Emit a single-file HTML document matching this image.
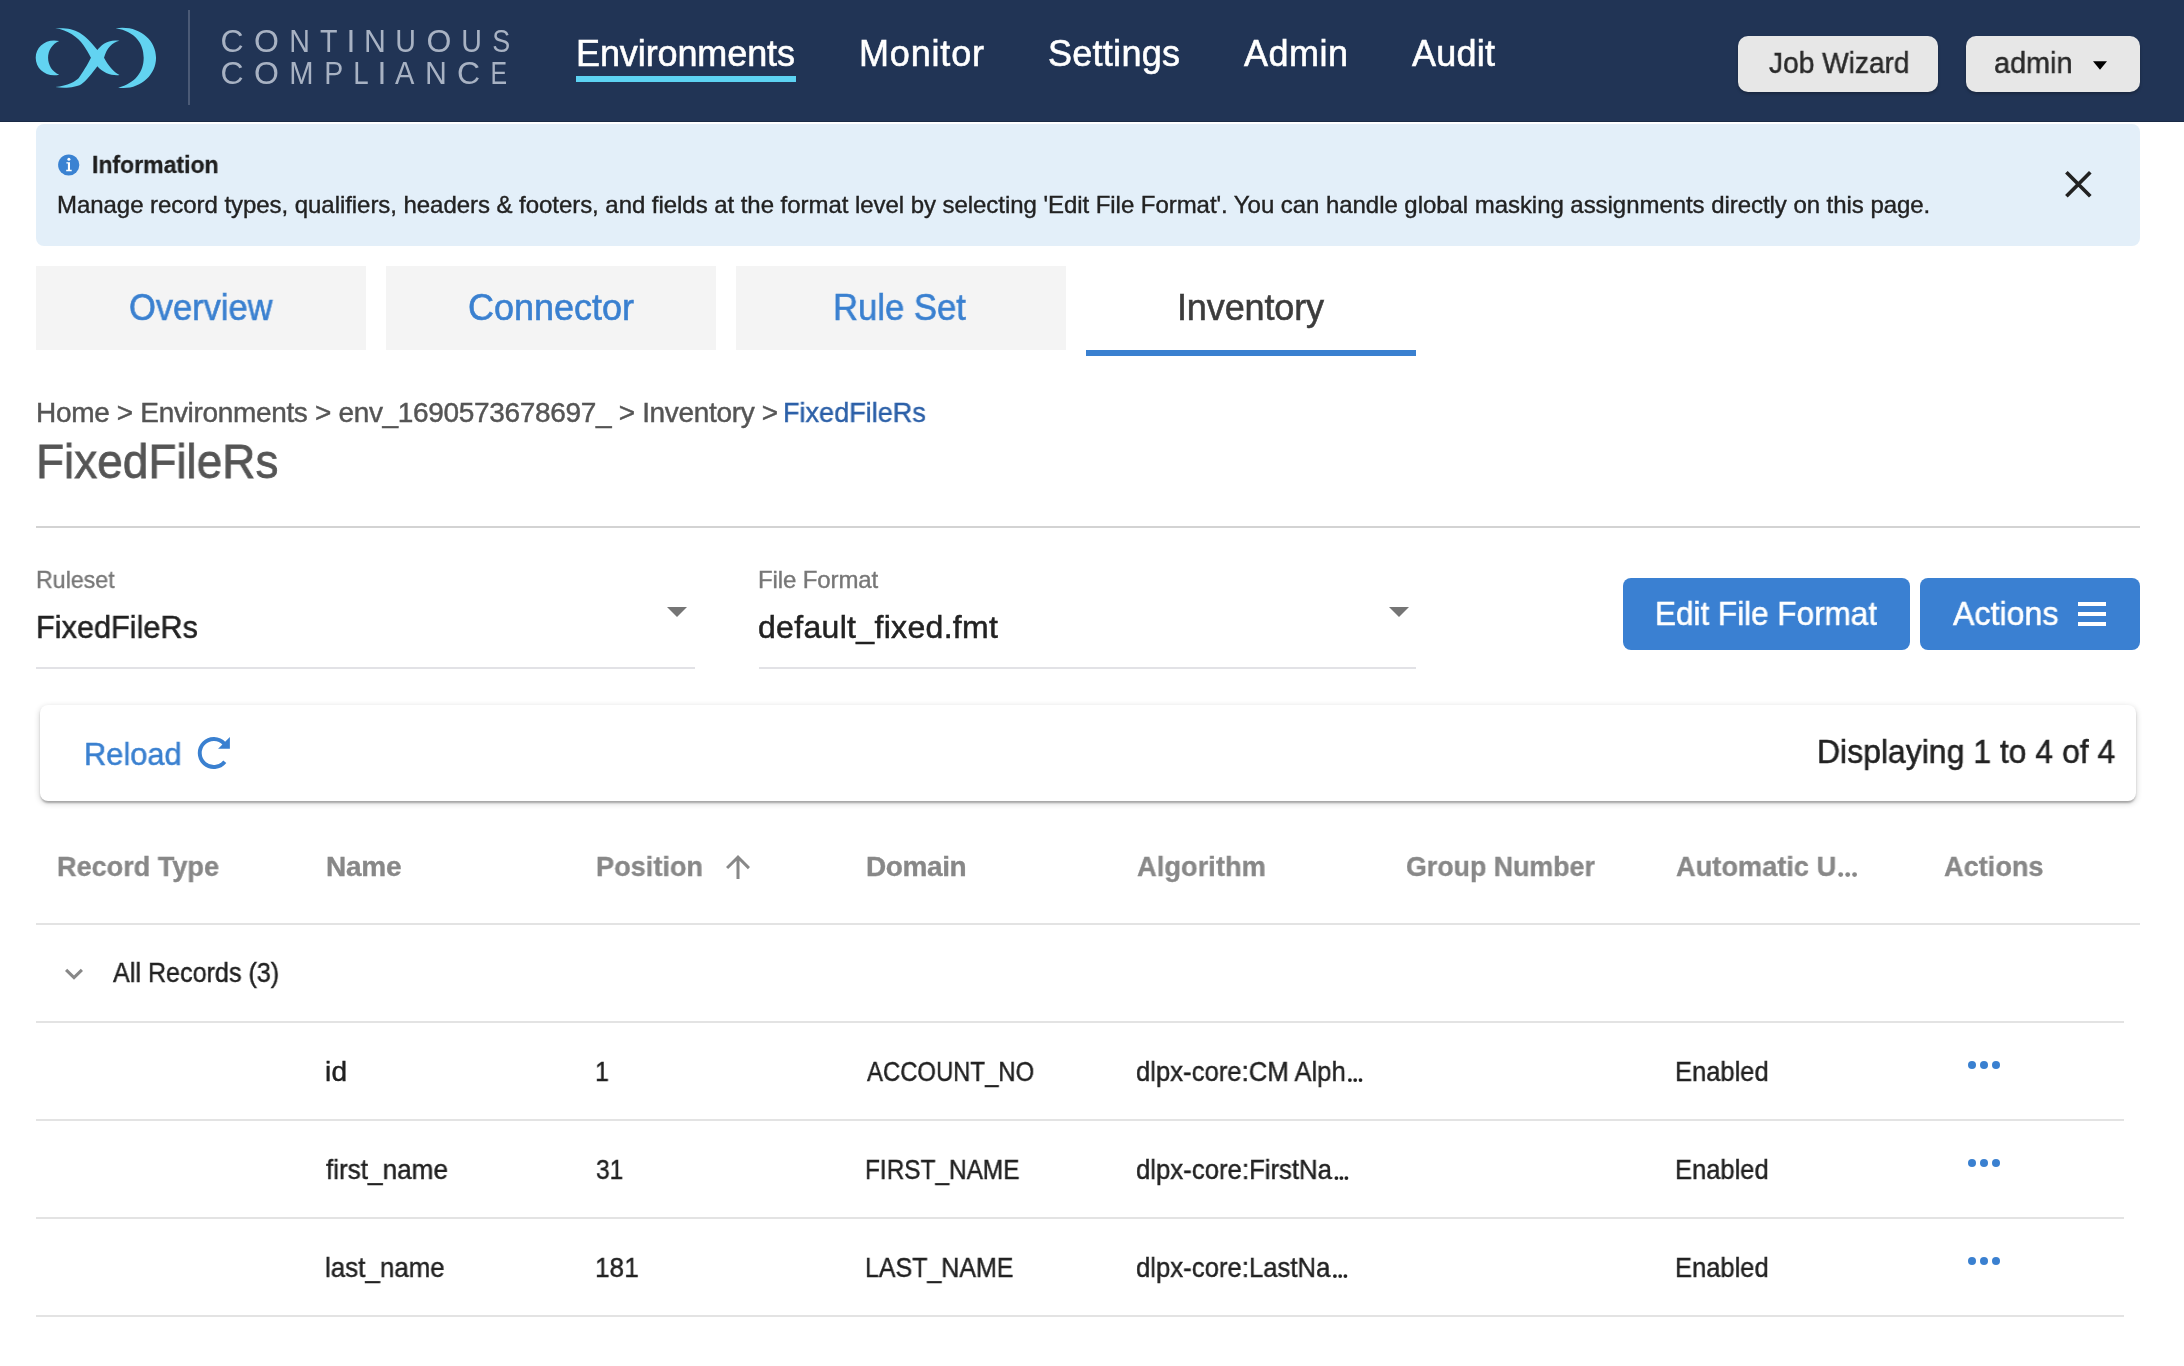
<!DOCTYPE html>
<html><head><meta charset="utf-8">
<style>
html,body{margin:0;padding:0;background:#fff;width:2184px;height:1366px;overflow:hidden;}
body{position:relative;font-family:"Liberation Sans",sans-serif;}
.t{position:absolute;white-space:pre;will-change:transform;}
.a{position:absolute;}
</style></head><body>
<div class="a" style="left:0;top:0;width:2184px;height:122px;background:#213455;"></div>
<div class="a" style="left:0;top:121px;width:2184px;height:1px;background:#1a2a45;"></div>
<svg class="a" style="left:25px;top:15px" width="180" height="90" viewBox="0 0 2184 1092"><g fill="#62d3f1">
<path d="M415,315 C260,280 130,380 130,520 C130,660 260,760 415,725 C330,690 280,610 280,520 C280,430 330,350 415,315 Z"/>
<path d="M366.8,161.7 C600,150 700,200 877.9,424.5 C920,370 1000,290 1146.4,311.9 C1060,330 990,400 958.8,519.8 C1000,600 1080,700 1146.4,727.7 C1060,740 940,700 877.9,620.8 C820,700 740,800 678.7,843.2 C620,875 500,895 366.8,874.9 C520,860 620,800 649.8,768 C700,700 760,600 799.9,519.8 C770,460 740,410 707.6,363.8 C640,270 520,180 366.8,161.7 Z"/>
<path d="M1100,162 C1380,120 1590,300 1590,520 C1590,740 1380,920 1130,882 C1340,830 1440,690 1440,520 C1440,350 1340,200 1100,162 Z"/>
</g></svg>
<svg class="a" style="left:0;top:0;will-change:transform" width="540" height="110"><g fill="#a8b2c3" font-family="Liberation Sans" font-size="32">
<text transform="translate(220.50 52.4) scale(1.000 1)">C</text><text transform="translate(254.00 52.4) scale(1.000 1)">O</text><text transform="translate(289.21 52.4) scale(0.895 1)">N</text><text transform="translate(320.00 52.4) scale(0.895 1)">T</text><text transform="translate(346.50 52.4) scale(1.000 1)">I</text><text transform="translate(364.11 52.4) scale(0.947 1)">N</text><text transform="translate(395.21 52.4) scale(0.895 1)">U</text><text transform="translate(426.50 52.4) scale(1.000 1)">O</text><text transform="translate(461.21 52.4) scale(0.895 1)">U</text><text transform="translate(492.16 52.4) scale(0.842 1)">S</text><text transform="translate(220.50 84.2) scale(1.000 1)">C</text><text transform="translate(254.00 84.2) scale(1.000 1)">O</text><text transform="translate(289.17 84.2) scale(0.913 1)">M</text><text transform="translate(324.22 84.2) scale(0.889 1)">P</text><text transform="translate(353.27 84.2) scale(0.867 1)">L</text><text transform="translate(377.50 84.2) scale(1.000 1)">I</text><text transform="translate(395.00 84.2) scale(0.909 1)">A</text><text transform="translate(425.11 84.2) scale(0.947 1)">N</text><text transform="translate(457.00 84.2) scale(1.000 1)">C</text><text transform="translate(490.44 84.2) scale(0.778 1)">E</text>
</g></svg>

<div class="a" style="left:188px;top:10px;width:2px;height:95px;background:#4b5a76;"></div>
<div class="a" style="left:576px;top:76px;width:220px;height:6px;background:#5dd3f3;"></div>
<div class="a" style="left:1738px;top:36px;width:200px;height:56px;border-radius:10px;background:#e7e7e7;box-shadow:0 2px 3px rgba(0,0,0,.25);"></div>
<div class="a" style="left:1966px;top:36px;width:174px;height:56px;border-radius:10px;background:#e7e7e7;box-shadow:0 2px 3px rgba(0,0,0,.25);"></div>
<svg class="a" style="left:2090px;top:58px" width="20" height="14"><path d="M3 3.3 L17 3.3 L10 11.7 Z" fill="#000"/></svg>
<div class="a" style="left:36px;top:124px;width:2104px;height:122px;border-radius:8px;background:#e3eff9;"></div>
<svg class="a" style="left:56px;top:152px" width="26" height="26" viewBox="0 0 26 26"><circle cx="12.7" cy="13" r="10.6" fill="#3a82d2"/><circle cx="12.9" cy="7.3" r="1.5" fill="#fff"/><path d="M10.4 10.2 H14 V17.8 H15.7 V19.2 H10.2 V17.8 H11.9 V11.6 H10.4 Z" fill="#fff"/></svg>
<svg class="a" style="left:2060px;top:166px" width="36" height="36"><path d="M6.4 6.3 L30.3 30.2 M30.3 6.3 L6.4 30.2" stroke="#222" stroke-width="3.7"/></svg>
<div class="a" style="left:36px;top:266px;width:330px;height:84px;background:#f4f4f4;"></div>
<div class="a" style="left:386px;top:266px;width:330px;height:84px;background:#f4f4f4;"></div>
<div class="a" style="left:736px;top:266px;width:330px;height:84px;background:#f4f4f4;"></div>
<div class="a" style="left:1086px;top:350px;width:330px;height:6px;background:#3a80d0;"></div>
<div class="a" style="left:36px;top:526px;width:2104px;height:2px;background:#d3d3d3;"></div>
<div class="a" style="left:36px;top:667px;width:659px;height:2px;background:#e2e2e6;"></div>
<div class="a" style="left:759px;top:667px;width:657px;height:2px;background:#e2e2e6;"></div>
<svg class="a" style="left:660px;top:600px" width="34" height="24"><path d="M7 7.1 L27 7.1 L17 17 Z" fill="#757575"/></svg>
<svg class="a" style="left:1382px;top:600px" width="34" height="24"><path d="M7 7.1 L27 7.1 L17 17 Z" fill="#757575"/></svg>
<div class="a" style="left:1623px;top:578px;width:287px;height:72px;border-radius:8px;background:#3a80d2;"></div>
<div class="a" style="left:1920px;top:578px;width:220px;height:72px;border-radius:8px;background:#3a80d2;"></div>
<div class="a" style="left:2078px;top:602px;width:28px;height:4px;background:#fff;"></div>
<div class="a" style="left:2078px;top:612px;width:28px;height:4px;background:#fff;"></div>
<div class="a" style="left:2078px;top:622px;width:28px;height:4px;background:#fff;"></div>
<div class="a" style="left:40px;top:705px;width:2096px;height:96px;border-radius:8px;background:#fff;box-shadow:0 2px 2px rgba(0,0,0,.14),0 4px 2px -2px rgba(0,0,0,.12),0 2px 6px rgba(0,0,0,.2);"></div>
<svg class="a" style="left:190px;top:728px" width="48" height="48"><g transform="translate(-190 -728)"><path d="M224.78 761.76 A14.05 14.05 0 1 1 224.24 743.6" stroke="#3a80d0" stroke-width="3.9" fill="none"/><path d="M229.9 737 L229.9 748.7 L218.1 748.7 Z" fill="#3a80d0"/></g></svg>
<div class="a" style="left:36px;top:923px;width:2104px;height:2px;background:#e3e3e3;"></div>
<div class="a" style="left:36px;top:1021px;width:2088px;height:2px;background:#e3e3e3;"></div>
<div class="a" style="left:36px;top:1119px;width:2088px;height:2px;background:#e3e3e3;"></div>
<div class="a" style="left:36px;top:1217px;width:2088px;height:2px;background:#e3e3e3;"></div>
<div class="a" style="left:36px;top:1315px;width:2088px;height:2px;background:#e3e3e3;"></div>
<svg class="a" style="left:720px;top:849px" width="36" height="36" viewBox="0 0 24 24"><path fill="#888" d="M4 12l1.41 1.41L11 7.83V20h2V7.83l5.58 5.59L20 12l-8-8-8 8z"/></svg>
<svg class="a" style="left:60px;top:960px" width="28" height="28"><path d="M6.1 9.9 L14 17.6 L21.9 9.9" stroke="#888" stroke-width="3.1" fill="none"/></svg>
<svg class="a" style="left:1960px;top:1050px" width="48" height="230"><g fill="#3a80d0"><circle cx="12" cy="15" r="4"/><circle cx="24" cy="15" r="4"/><circle cx="36" cy="15" r="4"/><circle cx="12" cy="113" r="4"/><circle cx="24" cy="113" r="4"/><circle cx="36" cy="113" r="4"/><circle cx="12" cy="211" r="4"/><circle cx="24" cy="211" r="4"/><circle cx="36" cy="211" r="4"/></g></svg>
<svg class="a" style="left:0;top:0" width="2184" height="1366"><circle cx="1349.9" cy="1080.1" r="1.90" fill="#222222"/><circle cx="1355.2" cy="1080.1" r="1.90" fill="#222222"/><circle cx="1360.5" cy="1080.1" r="1.90" fill="#222222"/><circle cx="1336.4" cy="1178.1" r="1.90" fill="#222222"/><circle cx="1341.4" cy="1178.1" r="1.90" fill="#222222"/><circle cx="1346.4" cy="1178.1" r="1.90" fill="#222222"/><circle cx="1334.9" cy="1276.1" r="1.90" fill="#222222"/><circle cx="1340.2" cy="1276.1" r="1.90" fill="#222222"/><circle cx="1345.4" cy="1276.1" r="1.90" fill="#222222"/><circle cx="1840.7" cy="874.6" r="2.40" fill="#888888"/><circle cx="1847.7" cy="874.6" r="2.40" fill="#888888"/><circle cx="1854.6" cy="874.6" r="2.40" fill="#888888"/></svg>
<div class="t" style="left:576.0px;top:35.5px;font-size:36px;line-height:36px;font-weight:400;color:#ffffff;letter-spacing:-0.10px;-webkit-text-stroke:0.58px #ffffff">Environments</div>
<div class="t" style="left:859.0px;top:35.5px;font-size:36px;line-height:36px;font-weight:400;color:#ffffff;letter-spacing:0.82px;-webkit-text-stroke:0.58px #ffffff">Monitor</div>
<div class="t" style="left:1048.0px;top:35.5px;font-size:36px;line-height:36px;font-weight:400;color:#ffffff;letter-spacing:0.27px;-webkit-text-stroke:0.58px #ffffff">Settings</div>
<div class="t" style="left:1244.0px;top:35.5px;font-size:36px;line-height:36px;font-weight:400;color:#ffffff;letter-spacing:0.50px;-webkit-text-stroke:0.58px #ffffff">Admin</div>
<div class="t" style="left:1412.0px;top:35.5px;font-size:36px;line-height:36px;font-weight:400;color:#ffffff;letter-spacing:0.24px;-webkit-text-stroke:0.58px #ffffff">Audit</div>
<div class="t" style="left:1769.0px;top:48.1px;font-size:30px;line-height:30px;font-weight:400;color:#2a2a2a;letter-spacing:0.00px;-webkit-text-stroke:0.48px #2a2a2a;transform:scaleX(0.9369);transform-origin:0 0">Job Wizard</div>
<div class="t" style="left:1994.0px;top:48.1px;font-size:30px;line-height:30px;font-weight:400;color:#2a2a2a;letter-spacing:0.00px;-webkit-text-stroke:0.48px #2a2a2a;transform:scaleX(0.9617);transform-origin:0 0">admin</div>
<div class="t" style="left:92.0px;top:152.7px;font-size:24px;line-height:24px;font-weight:700;color:#1f1f1f;letter-spacing:0.00px;-webkit-text-stroke:0.29px #1f1f1f;transform:scaleX(0.9591);transform-origin:0 0">Information</div>
<div class="t" style="left:57.0px;top:192.7px;font-size:24px;line-height:24px;font-weight:400;color:#222222;letter-spacing:-0.05px;-webkit-text-stroke:0.38px #222222">Manage record types, qualifiers, headers &amp; footers, and fields at the format level by selecting 'Edit File Format'. You can handle global masking assignments directly on this page.</div>
<div class="t" style="left:128.5px;top:289.5px;font-size:36px;line-height:36px;font-weight:400;color:#3a80d0;letter-spacing:0.00px;-webkit-text-stroke:0.58px #3a80d0;transform:scaleX(0.9565);transform-origin:0 0">Overview</div>
<div class="t" style="left:468.0px;top:289.5px;font-size:36px;line-height:36px;font-weight:400;color:#3a80d0;letter-spacing:-0.01px;-webkit-text-stroke:0.58px #3a80d0">Connector</div>
<div class="t" style="left:833.1px;top:289.5px;font-size:36px;line-height:36px;font-weight:400;color:#3a80d0;letter-spacing:0.00px;-webkit-text-stroke:0.58px #3a80d0;transform:scaleX(0.9627);transform-origin:0 0">Rule Set</div>
<div class="t" style="left:1177.0px;top:289.5px;font-size:36px;line-height:36px;font-weight:400;color:#3c3c3c;letter-spacing:-0.13px;-webkit-text-stroke:0.58px #3c3c3c">Inventory</div>
<div class="t" style="left:36.0px;top:399.3px;font-size:28px;line-height:28px;font-weight:400;color:#555555;letter-spacing:-0.33px;-webkit-text-stroke:0.45px #555555">Home &gt; Environments &gt; env_1690573678697_ &gt; Inventory &gt;</div>
<div class="t" style="left:783.1px;top:399.3px;font-size:28px;line-height:28px;font-weight:400;color:#2c60a8;letter-spacing:0.00px;-webkit-text-stroke:0.45px #2c60a8;transform:scaleX(0.9668);transform-origin:0 0">FixedFileRs</div>
<div class="t" style="left:36.1px;top:438.4px;font-size:48px;line-height:48px;font-weight:400;color:#555555;letter-spacing:0.00px;-webkit-text-stroke:0.77px #555555;transform:scaleX(0.9564);transform-origin:0 0">FixedFileRs</div>
<div class="t" style="left:36.0px;top:567.7px;font-size:24px;line-height:24px;font-weight:400;color:#777777;letter-spacing:0.00px;-webkit-text-stroke:0.38px #777777;transform:scaleX(0.9665);transform-origin:0 0">Ruleset</div>
<div class="t" style="left:36.1px;top:610.9px;font-size:32px;line-height:32px;font-weight:400;color:#222222;letter-spacing:0.00px;-webkit-text-stroke:0.51px #222222;transform:scaleX(0.9583);transform-origin:0 0">FixedFileRs</div>
<div class="t" style="left:758.0px;top:567.7px;font-size:24px;line-height:24px;font-weight:400;color:#777777;letter-spacing:-0.12px;-webkit-text-stroke:0.38px #777777">File Format</div>
<div class="t" style="left:758.0px;top:610.9px;font-size:32px;line-height:32px;font-weight:400;color:#222222;letter-spacing:0.32px;-webkit-text-stroke:0.51px #222222">default_fixed.fmt</div>
<div class="t" style="left:1655.1px;top:597.1px;font-size:33px;line-height:33px;font-weight:400;color:#ffffff;letter-spacing:0.00px;-webkit-text-stroke:0.53px #ffffff;transform:scaleX(0.9535);transform-origin:0 0">Edit File Format</div>
<div class="t" style="left:1953.0px;top:597.1px;font-size:33px;line-height:33px;font-weight:400;color:#ffffff;letter-spacing:0.00px;-webkit-text-stroke:0.53px #ffffff;transform:scaleX(0.9748);transform-origin:0 0">Actions</div>
<div class="t" style="left:84.1px;top:737.9px;font-size:32px;line-height:32px;font-weight:400;color:#3a80d0;letter-spacing:0.00px;-webkit-text-stroke:0.51px #3a80d0;transform:scaleX(0.9630);transform-origin:0 0">Reload</div>
<div class="t" style="left:1817.1px;top:735.1px;font-size:33px;line-height:33px;font-weight:400;color:#222222;letter-spacing:0.00px;-webkit-text-stroke:0.53px #222222;transform:scaleX(0.9679);transform-origin:0 0">Displaying 1 to 4 of 4</div>
<div class="t" style="left:56.5px;top:853.3px;font-size:28px;line-height:28px;font-weight:700;color:#888888;letter-spacing:0.00px;-webkit-text-stroke:0.34px #888888;transform:scaleX(0.9672);transform-origin:0 0">Record Type</div>
<div class="t" style="left:326.0px;top:853.3px;font-size:28px;line-height:28px;font-weight:700;color:#888888;letter-spacing:-0.23px;-webkit-text-stroke:0.34px #888888">Name</div>
<div class="t" style="left:596.0px;top:853.3px;font-size:28px;line-height:28px;font-weight:700;color:#888888;letter-spacing:0.00px;-webkit-text-stroke:0.34px #888888;transform:scaleX(0.9692);transform-origin:0 0">Position</div>
<div class="t" style="left:865.5px;top:853.3px;font-size:28px;line-height:28px;font-weight:700;color:#888888;letter-spacing:-0.41px;-webkit-text-stroke:0.34px #888888">Domain</div>
<div class="t" style="left:1137.0px;top:853.3px;font-size:28px;line-height:28px;font-weight:700;color:#888888;letter-spacing:0.00px;-webkit-text-stroke:0.34px #888888;transform:scaleX(0.9748);transform-origin:0 0">Algorithm</div>
<div class="t" style="left:1406.0px;top:853.3px;font-size:28px;line-height:28px;font-weight:700;color:#888888;letter-spacing:0.00px;-webkit-text-stroke:0.34px #888888;transform:scaleX(0.9560);transform-origin:0 0">Group Number</div>
<div class="t" style="left:1676.0px;top:853.3px;font-size:28px;line-height:28px;font-weight:700;color:#888888;letter-spacing:0.00px;-webkit-text-stroke:0.34px #888888;transform:scaleX(0.9714);transform-origin:0 0">Automatic U</div>
<div class="t" style="left:1944.0px;top:853.3px;font-size:28px;line-height:28px;font-weight:700;color:#888888;letter-spacing:0.00px;-webkit-text-stroke:0.34px #888888;transform:scaleX(0.9696);transform-origin:0 0">Actions</div>
<div class="t" style="left:113.0px;top:959.3px;font-size:28px;line-height:28px;font-weight:400;color:#222222;letter-spacing:0.00px;-webkit-text-stroke:0.45px #222222;transform:scaleX(0.8975);transform-origin:0 0">All Records (3)</div>
<div class="t" style="left:325.0px;top:1058.3px;font-size:28px;line-height:28px;font-weight:400;color:#222222;letter-spacing:0.38px;-webkit-text-stroke:0.45px #222222">id</div>
<div class="t" style="left:595.2px;top:1058.3px;font-size:28px;line-height:28px;font-weight:400;color:#222222;letter-spacing:0.00px;-webkit-text-stroke:0.45px #222222;transform:scaleX(0.8923);transform-origin:0 0">1</div>
<div class="t" style="left:866.5px;top:1058.3px;font-size:28px;line-height:28px;font-weight:400;color:#222222;letter-spacing:0.00px;-webkit-text-stroke:0.45px #222222;transform:scaleX(0.8528);transform-origin:0 0">ACCOUNT_NO</div>
<div class="t" style="left:1136.1px;top:1058.3px;font-size:28px;line-height:28px;font-weight:400;color:#222222;letter-spacing:0.00px;-webkit-text-stroke:0.45px #222222;transform:scaleX(0.9169);transform-origin:0 0">dlpx-core:CM Alph</div>
<div class="t" style="left:1675.2px;top:1058.3px;font-size:28px;line-height:28px;font-weight:400;color:#222222;letter-spacing:0.00px;-webkit-text-stroke:0.45px #222222;transform:scaleX(0.9114);transform-origin:0 0">Enabled</div>
<div class="t" style="left:326.0px;top:1156.3px;font-size:28px;line-height:28px;font-weight:400;color:#222222;letter-spacing:0.00px;-webkit-text-stroke:0.45px #222222;transform:scaleX(0.9328);transform-origin:0 0">first_name</div>
<div class="t" style="left:596.1px;top:1156.3px;font-size:28px;line-height:28px;font-weight:400;color:#222222;letter-spacing:0.00px;-webkit-text-stroke:0.45px #222222;transform:scaleX(0.8792);transform-origin:0 0">31</div>
<div class="t" style="left:864.8px;top:1156.3px;font-size:28px;line-height:28px;font-weight:400;color:#222222;letter-spacing:0.00px;-webkit-text-stroke:0.45px #222222;transform:scaleX(0.8708);transform-origin:0 0">FIRST_NAME</div>
<div class="t" style="left:1136.1px;top:1156.3px;font-size:28px;line-height:28px;font-weight:400;color:#222222;letter-spacing:0.00px;-webkit-text-stroke:0.45px #222222;transform:scaleX(0.9196);transform-origin:0 0">dlpx-core:FirstNa</div>
<div class="t" style="left:1675.2px;top:1156.3px;font-size:28px;line-height:28px;font-weight:400;color:#222222;letter-spacing:0.00px;-webkit-text-stroke:0.45px #222222;transform:scaleX(0.9114);transform-origin:0 0">Enabled</div>
<div class="t" style="left:325.1px;top:1254.3px;font-size:28px;line-height:28px;font-weight:400;color:#222222;letter-spacing:0.00px;-webkit-text-stroke:0.45px #222222;transform:scaleX(0.9270);transform-origin:0 0">last_name</div>
<div class="t" style="left:595.1px;top:1254.3px;font-size:28px;line-height:28px;font-weight:400;color:#222222;letter-spacing:0.00px;-webkit-text-stroke:0.45px #222222;transform:scaleX(0.9356);transform-origin:0 0">181</div>
<div class="t" style="left:864.7px;top:1254.3px;font-size:28px;line-height:28px;font-weight:400;color:#222222;letter-spacing:0.00px;-webkit-text-stroke:0.45px #222222;transform:scaleX(0.8918);transform-origin:0 0">LAST_NAME</div>
<div class="t" style="left:1136.1px;top:1254.3px;font-size:28px;line-height:28px;font-weight:400;color:#222222;letter-spacing:0.00px;-webkit-text-stroke:0.45px #222222;transform:scaleX(0.9186);transform-origin:0 0">dlpx-core:LastNa</div>
<div class="t" style="left:1675.2px;top:1254.3px;font-size:28px;line-height:28px;font-weight:400;color:#222222;letter-spacing:0.00px;-webkit-text-stroke:0.45px #222222;transform:scaleX(0.9114);transform-origin:0 0">Enabled</div>
</body></html>
